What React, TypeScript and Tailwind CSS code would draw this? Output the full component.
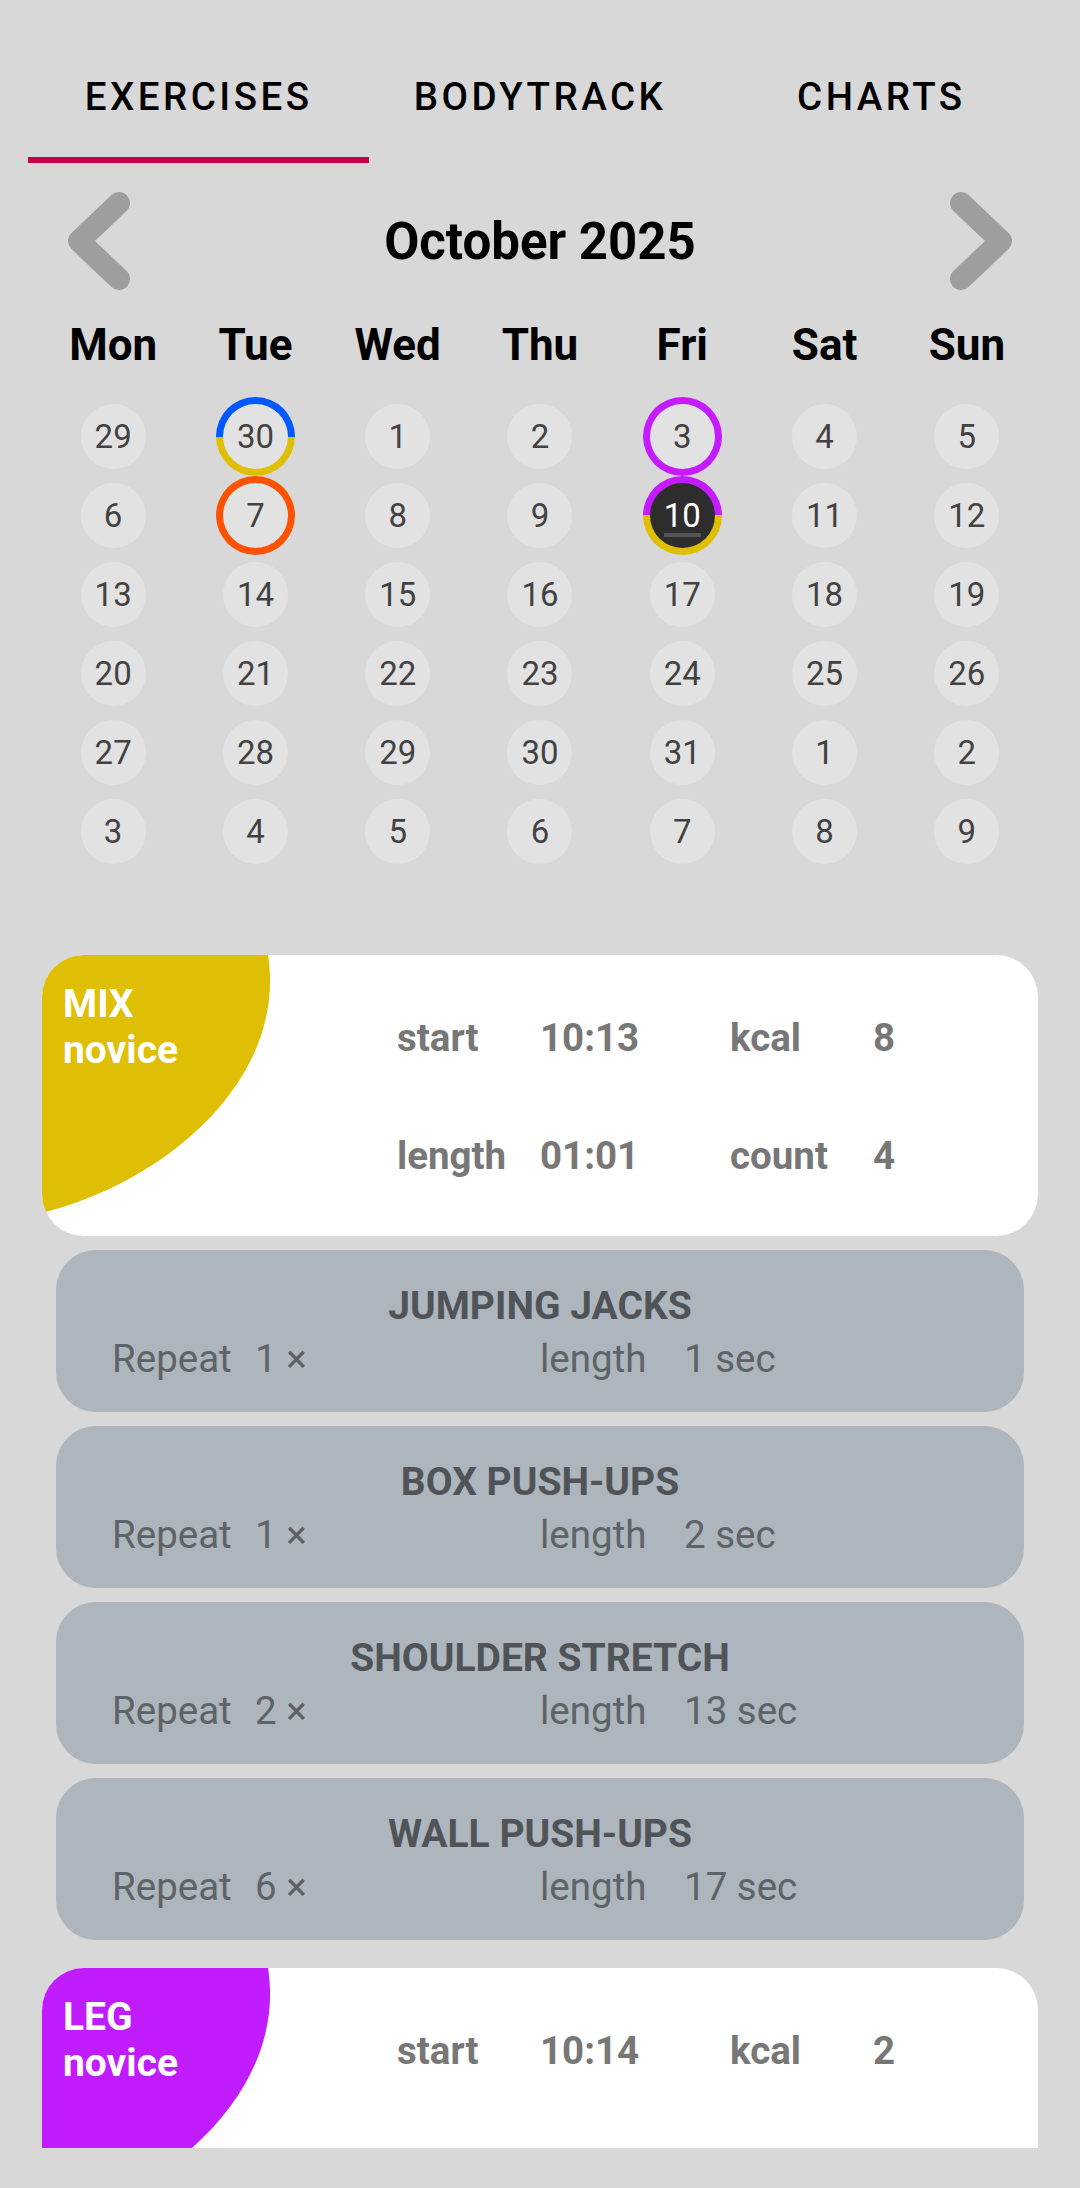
import React from "react";

type Ring = "none" | "blueYellow" | "orange" | "purple" | "purpleYellow";

const weeks: number[][] = [
  [29, 30, 1, 2, 3, 4, 5],
  [6, 7, 8, 9, 10, 11, 12],
  [13, 14, 15, 16, 17, 18, 19],
  [20, 21, 22, 23, 24, 25, 26],
  [27, 28, 29, 30, 31, 1, 2],
  [3, 4, 5, 6, 7, 8, 9],
];

const ringFor = (r: number, c: number): Ring => {
  if (r === 0 && c === 1) return "blueYellow";
  if (r === 0 && c === 4) return "purple";
  if (r === 1 && c === 1) return "orange";
  if (r === 1 && c === 4) return "purpleYellow";
  return "none";
};

const ringClass: Record<Ring, string> = {
  none: "",
  blueYellow: "bg-[linear-gradient(to_bottom,#0058ff_50%,#dfbe06_50%)]",
  orange: "bg-[#ff5200]",
  purple: "bg-[#c41cff]",
  purpleYellow: "bg-[linear-gradient(to_bottom,#c41cff_50%,#dfbe06_50%)]",
};

function Day({ n, ring, today }: { n: number; ring: Ring; today: boolean }) {
  const inner = (
    <div
      className={`relative flex h-[65px] w-[65px] items-center justify-center rounded-full text-[33px] ${
        today ? "bg-[#2d2d2d] text-white" : "bg-[#e2e2e2] text-[#424242]"
      }`}
    >
      {n}
      {today && <div className="absolute left-[14px] top-[50px] h-[4px] w-[37px] bg-[#555555]" />}
    </div>
  );
  if (ring === "none") return inner;
  return (
    <div className={`flex h-[79px] w-[79px] items-center justify-center rounded-full ${ringClass[ring]}`}>
      {inner}
    </div>
  );
}

function Chevron({ dir }: { dir: "left" | "right" }) {
  return (
    <svg width="66" height="100" viewBox="0 0 66 100">
      <polyline
        points={dir === "left" ? "52,12 12,50 52,88" : "14,12 54,50 14,88"}
        fill="none"
        stroke="#9e9e9e"
        strokeWidth="22"
        strokeLinecap="round"
        strokeLinejoin="round"
      />
    </svg>
  );
}

function Workout({
  color,
  name,
  level,
  rows,
  extraClass = "",
}: {
  color: string;
  name: string;
  level: string;
  rows: [string, string, string, string][];
  extraClass?: string;
}) {
  return (
    <div className={`relative mx-[42px] h-[281px] shrink-0 overflow-hidden rounded-[42px] bg-white ${extraClass}`}>
      <svg className="absolute left-0 top-0" width="250" height="260" viewBox="0 0 250 260">
        <path d="M0 0H226C245 120 130 225 0 258Z" fill={color} />
      </svg>
      <div className="relative flex">
        <div className="w-[355px] pl-[21px] pt-[26px] text-[39px] font-bold leading-[46px] text-white">
          <div>{name}</div>
          <div>{level}</div>
        </div>
        <div className="flex flex-col gap-[73px] pt-[60px]">
          {rows.map((r, i) => (
            <div key={i} className="flex text-[38.5px] font-bold leading-[45px] text-[#777777]">
              <span className="w-[143px]">{r[0]}</span>
              <span className="w-[190px]">{r[1]}</span>
              <span className="w-[143px]">{r[2]}</span>
              <span>{r[3]}</span>
            </div>
          ))}
        </div>
      </div>
    </div>
  );
}

function Exercise({ title, rep, len }: { title: string; rep: number; len: number }) {
  return (
    <div className="mx-[56px] h-[162px] shrink-0 rounded-[40px] bg-[#acb6bc] pt-[34px]">
      <div className="text-center text-[39px] font-bold leading-[45px] text-[#505458]">{title}</div>
      <div className="mt-[7px] flex pl-[56px] text-[38.5px] leading-[45px] text-[#5e6367]">
        <span className="w-[143px]">Repeat</span>
        <span className="w-[285px]">{rep} ×</span>
        <span className="w-[144px]">length</span>
        <span>{len} sec</span>
      </div>
    </div>
  );
}

export default function App() {
  const tabs = ["EXERCISES", "BODYTRACK", "CHARTS"];
  const days = ["Mon", "Tue", "Wed", "Thu", "Fri", "Sat", "Sun"];
  return (
    <div className="flex h-[2188px] w-[1080px] flex-col overflow-hidden bg-[#d8d8d8] pb-[40px] pt-[31px] font-['Roboto','Liberation_Sans',sans-serif]">
      {/* Tabs */}
      <div className="flex h-[132px] shrink-0 px-[28px]">
        {tabs.map((t, i) => (
          <div key={t} className="flex flex-1 flex-col">
            <div className="flex flex-1 items-center justify-center pt-[6px] text-[38.5px] font-medium tracking-[0.09em] text-black">
              {t}
            </div>
            <div className={`h-[6px] ${i === 0 ? "bg-[#c8004a]" : ""}`} />
          </div>
        ))}
      </div>

      {/* Month header */}
      <div className="mt-[28px] flex h-[100px] shrink-0 items-center px-[67px]">
        <Chevron dir="left" />
        <div className="flex-1 pt-[2px] text-center text-[51px] font-bold text-black">October 2025</div>
        <Chevron dir="right" />
      </div>

      {/* Weekday names */}
      <div className="mt-[28px] grid shrink-0 grid-cols-7 px-[42px] text-center text-[44px] font-bold leading-[52px] text-black">
        {days.map((d) => (
          <div key={d}>{d}</div>
        ))}
      </div>

      {/* Days */}
      <div className="mt-[26px] grid shrink-0 grid-cols-7 px-[42px]">
        {weeks.map((w, r) =>
          w.map((n, c) => (
            <div key={`${r}-${c}`} className="flex h-[79px] items-center justify-center">
              <Day n={n} ring={ringFor(r, c)} today={r === 1 && c === 4} />
            </div>
          ))
        )}
      </div>

      {/* Workout list */}
      <div className="mt-[84px] flex min-h-0 flex-1 flex-col gap-[14px] overflow-hidden">
        <Workout
          color="#dfbe06"
          name="MIX"
          level="novice"
          rows={[
            ["start", "10:13", "kcal", "8"],
            ["length", "01:01", "count", "4"],
          ]}
        />
        <Exercise title="JUMPING JACKS" rep={1} len={1} />
        <Exercise title="BOX PUSH-UPS" rep={1} len={2} />
        <Exercise title="SHOULDER STRETCH" rep={2} len={13} />
        <Exercise title="WALL PUSH-UPS" rep={6} len={17} />
        <Workout
          color="#c11cff"
          name="LEG"
          level="novice"
          extraClass="mt-[14px]"
          rows={[["start", "10:14", "kcal", "2"]]}
        />
      </div>
    </div>
  );
}
